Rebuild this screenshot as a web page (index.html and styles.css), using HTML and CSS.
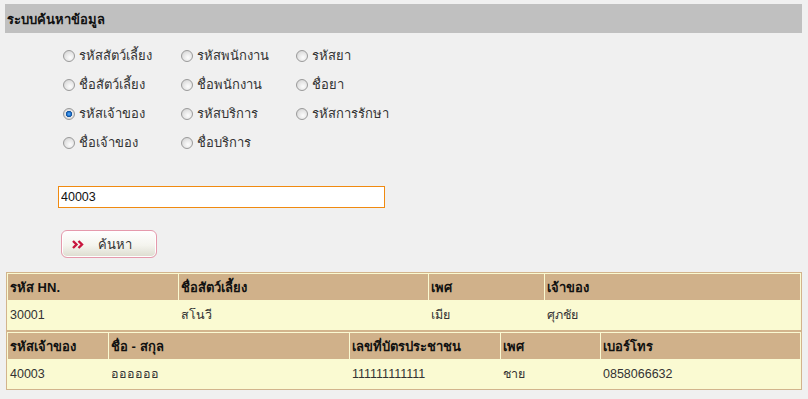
FILE: index.html
```html
<!DOCTYPE html>
<html lang="th">
<head>
  <meta charset="UTF-8">
  <title>ระบบค้นหาข้อมูล</title>
  <link rel="stylesheet" href="styles.css">
</head>
<body>
  <div class="search-title">ระบบค้นหาข้อมูล</div>

  <form class="search-form">
    <div class="options">
      <label class="option"><input type="radio" name="field"> รหัสสัตว์เลี้ยง</label>
      <label class="option"><input type="radio" name="field"> รหัสพนักงาน</label>
      <label class="option"><input type="radio" name="field"> รหัสยา</label>

      <label class="option"><input type="radio" name="field"> ชื่อสัตว์เลี้ยง</label>
      <label class="option"><input type="radio" name="field"> ชื่อพนักงาน</label>
      <label class="option"><input type="radio" name="field"> ชื่อยา</label>

      <label class="option"><input type="radio" name="field" checked> รหัสเจ้าของ</label>
      <label class="option"><input type="radio" name="field"> รหัสบริการ</label>
      <label class="option"><input type="radio" name="field"> รหัสการรักษา</label>

      <label class="option"><input type="radio" name="field"> ชื่อเจ้าของ</label>
      <label class="option"><input type="radio" name="field"> ชื่อบริการ</label>
    </div>

    <input type="text" class="keyword" value="40003">

    <button type="button" class="search-btn">
      <svg class="arrows" width="12" height="9" viewBox="0 0 12 9">
        <path d="M1 1 L4.5 4.5 L1 8 M6.5 1 L10 4.5 L6.5 8" fill="none" stroke="#c8163e" stroke-width="2.4"/>
      </svg>
      <span>ค้นหา</span>
    </button>
  </form>

  <div class="results">
    <table class="grid pet">
      <tr>
        <th class="c-hn">รหัส HN.</th>
        <th class="c-petname">ชื่อสัตว์เลี้ยง</th>
        <th class="c-sex">เพศ</th>
        <th class="c-owner">เจ้าของ</th>
      </tr>
      <tr>
        <td>30001</td>
        <td>สโนวี</td>
        <td>เมีย</td>
        <td>ศุภชัย</td>
      </tr>
    </table>
    <table class="grid owner">
      <tr>
        <th class="c-ownerid">รหัสเจ้าของ</th>
        <th class="c-name">ชื่อ - สกุล</th>
        <th class="c-idcard">เลขที่บัตรประชาชน</th>
        <th class="c-sex2">เพศ</th>
        <th class="c-phone">เบอร์โทร</th>
      </tr>
      <tr>
        <td>40003</td>
        <td>ออออออ</td>
        <td>111111111111</td>
        <td>ชาย</td>
        <td>0858066632</td>
      </tr>
    </table>
  </div>
</body>
</html>
```

FILE: styles.css
```css
body {
  margin: 0;
  padding: 4px 6px 0 5px;
  background: #f0f0f0;
  font-family: Tahoma, 'Liberation Sans', sans-serif;
  font-size: 12.5px;
  color: #222;
}
.search-title {
  background: #c0c0c0;
  height: 29px;
  line-height: 31px;
  padding-left: 2px;
  font-weight: bold;
  font-size: 13px;
  color: #111;
}
.search-form {
  padding-left: 53px;
}
/* radio choices */
.options {
  display: grid;
  grid-template-columns: 118px 115px 150px;
  grid-auto-rows: 29px;
  margin-top: 8px;
  padding-left: 5px;
}
.option {
  display: flex;
  align-items: center;
  gap: 4px;
  font-size: 13px;
  color: #333;
}
.option input {
  -webkit-appearance: none;
  appearance: none;
  width: 12px;
  height: 12px;
  margin: 0;
  border: 1px solid #9a9a9a;
  border-radius: 50%;
  background: radial-gradient(circle at 60% 65%, #fdfdfd 0%, #e4e4e4 55%, #c9c9c9 100%);
}
.option input:checked {
  background: radial-gradient(circle at 50% 50%, #5fb2ff 0%, #1c6fc9 28%, #0a4a96 40%, #e8e8e8 48%, #c9c9c9 100%);
}
.keyword {
  display: block;
  box-sizing: border-box;
  width: 327px;
  height: 22px;
  margin: 29px 0 0;
  padding: 0 2px;
  border: 1px solid #f08a10;
  background: #fff;
  font-family: 'Liberation Sans', sans-serif;
  font-size: 12.5px;
  color: #111;
  outline: none;
}
.search-btn {
  display: flex;
  align-items: center;
  box-sizing: border-box;
  width: 96px;
  height: 28px;
  margin: 22px 0 0 3px;
  padding: 0 0 0 10px;
  border: 1px solid #e59aac;
  border-radius: 6px;
  background: linear-gradient(#ffffff, #f4f4ee 55%, #dcdccf);
  box-shadow: inset 0 0 0 1px #fff;
  font-family: Tahoma, 'Liberation Sans', sans-serif;
  font-size: 13px;
  color: #333;
}
.search-btn .arrows {
  margin-right: 14px;
}
/* result tables */
.results {
  width: 796px;
  box-sizing: border-box;
  margin: 14px 0 0 1px;
  border: 1px solid #d2b48c;
  background: #fafad2;
}
.grid {
  width: 100%;
  table-layout: fixed;
  border-spacing: 1px;
}
.grid.owner {
  border-top: 2px solid #d2b48c;
}
.grid th,
.grid td {
  box-sizing: border-box;
  padding: 0 2px;
  text-align: left;
  white-space: nowrap;
}
.grid th {
  height: 26px;
  background: #d0b18a;
  font-size: 13px;
  font-weight: bold;
  color: #111;
}
.grid td {
  height: 28px;
  color: #333;
}
.c-hn { width: 170px; }
.c-petname { width: 249px; }
.c-sex { width: 115px; }
.c-owner { width: 255px; }
.c-ownerid { width: 100px; }
.c-name { width: 240px; }
.c-idcard { width: 150px; }
.c-sex2 { width: 99px; }
.c-phone { width: 199px; }
```
